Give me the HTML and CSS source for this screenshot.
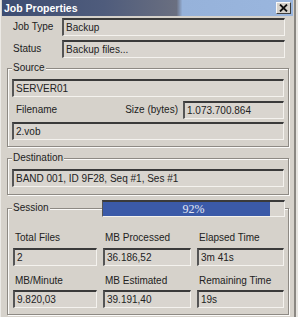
FILE: index.html
```html
<!DOCTYPE html>
<html lang="en">
<head>
  <meta charset="UTF-8" />
  <title>Job Properties</title>
  <link rel="stylesheet" href="styles.css">
</head>
<body>
  <div class="window">
    <div class="titlebar">
      <span class="title">Job Properties</span>
      <span class="close">
        <svg width="9" height="8" viewBox="0 0 9 8"><path d="M1 0.5 L8 7.5 M8 0.5 L1 7.5" stroke="#111" stroke-width="1.8"/></svg>
      </span>
    </div>
    <div class="content">
      <div class="info">
        <div class="row"><span class="lbl">Job Type</span><div class="field">Backup</div></div>
        <div class="row"><span class="lbl">Status</span><div class="field">Backup files...</div></div>
      </div>

      <fieldset class="group">
        <legend>Source</legend>
        <div class="field">SERVER01</div>
        <div class="file-row">
          <span class="lbl file-lbl">Filename</span>
          <span class="lbl">Size (bytes)</span>
          <div class="field">1.073.700.864</div>
        </div>
        <div class="field">2.vob</div>
      </fieldset>

      <fieldset class="group dest">
        <legend>Destination</legend>
        <div class="field">BAND 001, ID 9F28, Seq #1, Ses #1</div>
      </fieldset>

      <div class="session">
        <fieldset class="group">
          <legend>Session</legend>
          <div class="stats">
            <div class="stat"><span class="lbl">Total Files</span><div class="field">2</div></div>
            <div class="stat"><span class="lbl">MB Processed</span><div class="field">36.186,52</div></div>
            <div class="stat"><span class="lbl">Elapsed Time</span><div class="field">3m 41s</div></div>
            <div class="stat"><span class="lbl">MB/Minute</span><div class="field">9.820,03</div></div>
            <div class="stat"><span class="lbl">MB Estimated</span><div class="field">39.191,40</div></div>
            <div class="stat"><span class="lbl">Remaining Time</span><div class="field">19s</div></div>
          </div>
        </fieldset>
        <div class="progress">
          <div class="fill" style="width: 92%"></div>
          <span class="pct">92%</span>
        </div>
      </div>
    </div>
  </div>
</body>
</html>
```

FILE: styles.css
```css
* {
  box-sizing: border-box;
}
body {
  margin: 0;
  background: #e6e4e0;
  font-family: "Liberation Sans", Arial, sans-serif;
  font-size: 10px;
  color: #222;
}
.window {
  width: 296px;
  height: 317px;
  background: #d6d2cb;
  border-left: 1px solid #eceae6;
  border-right: 2px solid #8a8782;
  overflow: hidden;
}
.titlebar {
  height: 16px;
  margin: 0 1px;
  padding: 0 2px 0 2px;
  display: flex;
  align-items: center;
  justify-content: space-between;
  background: linear-gradient(to right, #3d4d72 0%, #4f5c7c 35%, #6a6f80 60%, #96b2da 62%, #9ab6de 100%);
}
.title {
  color: #fff;
  font-weight: bold;
  font-size: 10.5px;
}
.close {
  width: 15px;
  height: 12px;
  display: flex;
  align-items: center;
  justify-content: center;
  background: #d6d2cb;
  border: 1px solid;
  border-color: #f8f8f8 #404040 #404040 #f8f8f8;
}
.content {
  padding: 2px 5px 0 6px;
}
.info {
  margin: 0 4px 0 6px;
  display: flex;
  flex-direction: column;
  gap: 4px;
}
.row {
  display: grid;
  grid-template-columns: 49px 1fr;
  align-items: center;
}
.field {
  height: 18px;
  padding: 0 2px;
  line-height: 15px;
  white-space: nowrap;
  overflow: hidden;
  background: #d9d5cf;
  border-style: solid;
  border-width: 2px 1px 1px 2px;
  border-color: #3a3a3a #f4f2ee #f4f2ee #555;
}
.lbl {
  line-height: 12px;
  white-space: nowrap;
}
.group {
  margin: 4px 0 0;
  padding: 5px 4px 6px;
  min-width: 0;
  border: 1px solid #8e8a84;
  box-shadow: inset 1px 1px 0 #fbfaf8, 1px 1px 0 #fbfaf8;
}
.group legend {
  padding: 0 1px;
  line-height: 12px;
  background: #d6d2cb;
}
.group > .field + .file-row {
  margin-top: 4px;
}
.file-row {
  display: grid;
  grid-template-columns: 1fr auto 101px;
  column-gap: 5px;
  align-items: center;
  margin-bottom: 3px;
}
.file-lbl {
  padding-left: 4px;
}
.dest {
  margin-top: 5px;
  padding-bottom: 7px;
}
.session {
  position: relative;
  margin-top: 7px;
}
.session .group {
  margin-top: 0;
}
.stats {
  display: grid;
  grid-template-columns: 84px 88px 1fr;
  column-gap: 6px;
  row-gap: 9px;
  padding: 13px 0 0 1px;
}
.stat .lbl {
  display: block;
  margin: 0 0 4px 2px;
}
.stat:nth-child(n+4) .lbl {
  margin-bottom: 3px;
}
.progress {
  position: absolute;
  top: -2px;
  left: 95px;
  right: 4px;
  height: 17px;
  display: grid;
  background: #d9d5cf;
  border-style: solid;
  border-width: 2px 1px 1px 1px;
  border-color: #3a3a3a #f4f2ee #f4f2ee #555;
}
.progress > * {
  grid-area: 1 / 1;
}
.fill {
  background: #3b5aa8;
}
.pct {
  justify-self: center;
  align-self: center;
  color: #e4e8f4;
  font-family: "Liberation Serif", "Times New Roman", serif;
  font-size: 12px;
  line-height: 14px;
}
```
